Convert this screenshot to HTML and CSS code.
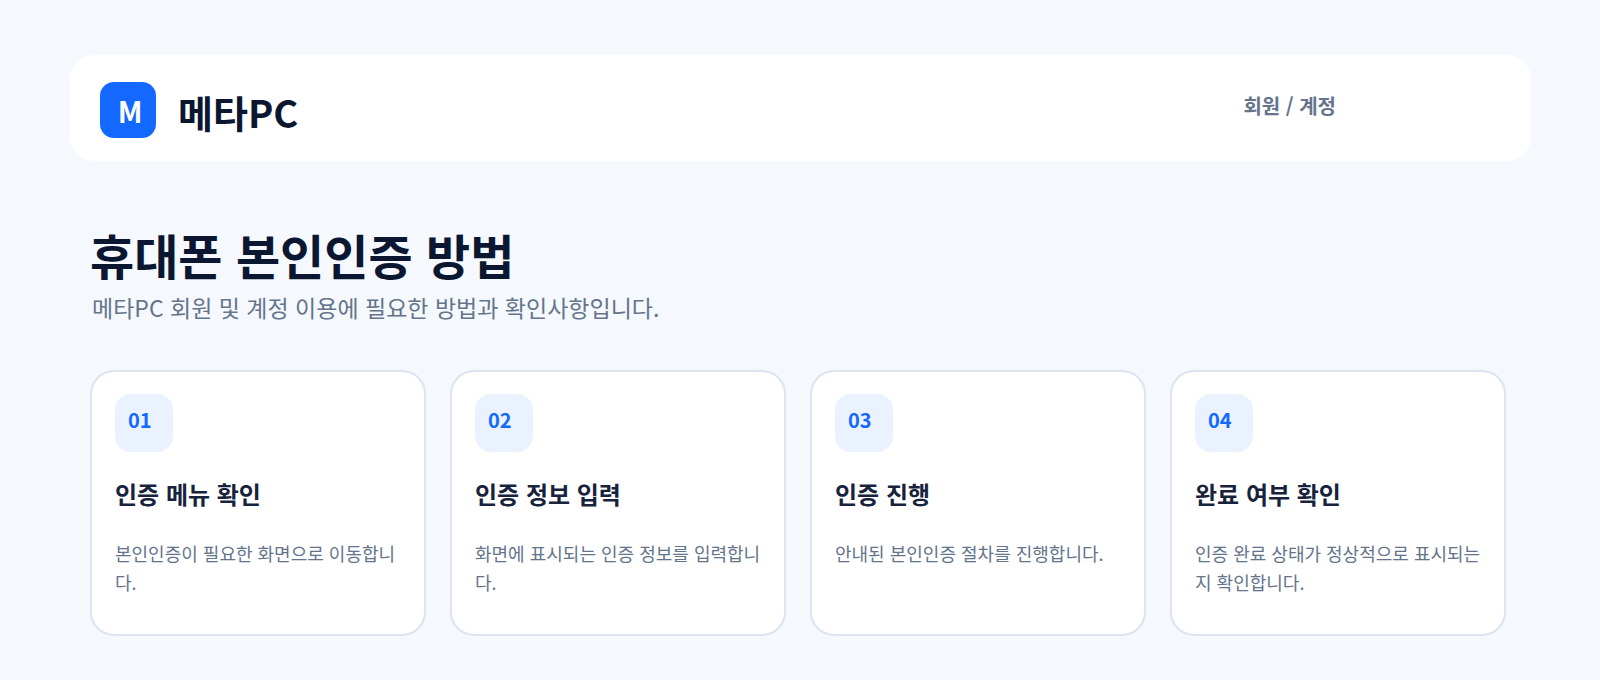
FILE: index.html
```html
<!DOCTYPE html>
<html lang="ko">
<head>
<meta charset="utf-8">
<title>휴대폰 본인인증 방법 - 메타PC</title>
<link rel="stylesheet" href="styles.css">
</head>
<body>
<div class="page">
  <header class="topbar">
    <div class="brand"><span class="logo">M</span><span class="brand-name">메타PC</span></div>
    <span class="section">회원 / 계정</span>
  </header>
  <main class="content">
    <h1 class="title">휴대폰 본인인증 방법</h1>
    <p class="lead">메타PC 회원 및 계정 이용에 필요한 방법과 확인사항입니다.</p>
    <ol class="steps">
      <li class="card"><span class="num">01</span><h2 class="card-title">인증 메뉴 확인</h2><p class="card-text">본인인증이 필요한 화면으로 이동합니다.</p></li>
      <li class="card"><span class="num">02</span><h2 class="card-title">인증 정보 입력</h2><p class="card-text">화면에 표시되는 인증 정보를 입력합니다.</p></li>
      <li class="card"><span class="num">03</span><h2 class="card-title">인증 진행</h2><p class="card-text">안내된 본인인증 절차를 진행합니다.</p></li>
      <li class="card"><span class="num">04</span><h2 class="card-title">완료 여부 확인</h2><p class="card-text">인증 완료 상태가 정상적으로 표시되는지 확인합니다.</p></li>
    </ol>
  </main>
</div>
</body>
</html>
```
FILE: styles.css
```css
* { box-sizing: border-box; }
body {
  margin: 0;
  background: #f5f8fd;
  color: #0b1730;
  font-family: "Noto Sans CJK KR", sans-serif;
}
.page { padding: 55px 69px 44px 70px; }
.topbar {
  display: flex;
  justify-content: space-between;
  align-items: flex-start;
  padding: 27px 195px 23px 30px;
  border-radius: 24px;
  background: #fff;
}
.brand { display: flex; gap: 22px; height: 56px; }
.logo {
  width: 56px;
  height: 56px;
  padding-left: 4px;
  border-radius: 14px;
  background: #1268ff;
  color: #fff;
  font-size: 29px;
  font-weight: 700;
  line-height: 56px;
  text-align: center;
}
.brand-name { font-size: 38px; font-weight: 700; line-height: 60px; }
.section { color: #64748b; font-size: 20px; font-weight: 700; line-height: 48px; }
.content { padding: 58px 25px 0 20px; }
.title { margin: 0; font-size: 48px; font-weight: 700; line-height: 70px; }
.lead { margin: 0; padding-left: 2px; color: #64748b; font-size: 23px; line-height: 36px; }
.steps {
  display: grid;
  grid-template-columns: repeat(4, 1fr);
  gap: 24px;
  margin: 45px 0 0;
  padding: 0;
  list-style: none;
}
.card {
  min-height: 266px;
  padding: 22px 23px;
  border: 2px solid #dbe4f0;
  border-radius: 24px;
  background: #fff;
}
.num {
  display: block;
  width: 58px;
  height: 58px;
  padding-left: 13px;
  border-radius: 16px;
  background: #eaf2ff;
  color: #1268ff;
  font-size: 20px;
  font-weight: 700;
  line-height: 52px;
}
.card-title { margin: 23px 0 0; color: #17233c; font-size: 24px; font-weight: 700; line-height: 38px; }
.card-text { margin: 26px 0 0; color: #64748b; font-size: 18px; line-height: 29px; }
```
